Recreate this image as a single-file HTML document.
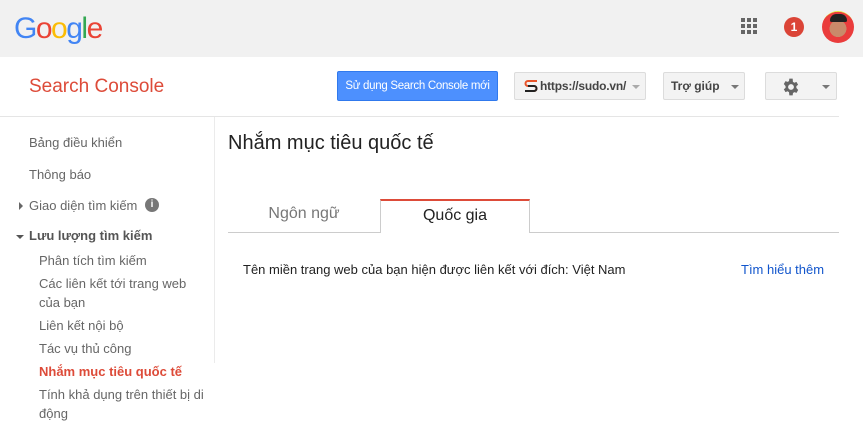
<!DOCTYPE html>
<html><head><meta charset="utf-8"><style>
*{margin:0;padding:0;box-sizing:border-box}
body{width:863px;height:421px;overflow:hidden;background:#fff;font-family:"Liberation Sans",Arial,sans-serif;position:relative;color:#222}
.a{position:absolute}
.hdr{left:0;top:0;width:863px;height:57px;background:#f1f1f1}
.btn{position:absolute;border:1px solid #dcdcdc;background:#f3f3f3;border-radius:2px;font-size:12px;font-weight:bold;color:#444;display:flex;align-items:center}
.caret{width:0;height:0;border-left:4px solid transparent;border-right:4px solid transparent;border-top:4px solid #777;position:absolute}
.nav{font-size:13px;color:#666;position:absolute;white-space:nowrap}
.sub{font-size:13px;color:#666;position:absolute;left:39px;line-height:19px}
</style></head><body>
<div class="a hdr"></div>
<div class="a" style="left:14px;top:12px;font-size:30px;letter-spacing:-1.5px;font-family:'Liberation Sans',sans-serif"><span style="color:#4285f4">G</span><span style="color:#ea4335">o</span><span style="color:#fbbc05">o</span><span style="color:#4285f4">g</span><span style="color:#34a853">l</span><span style="color:#ea4335">e</span></div>
<svg class="a" style="left:741px;top:18px" width="17" height="17"><g fill="#666"><rect x="0" y="0" width="4" height="4"/><rect x="6" y="0" width="4" height="4"/><rect x="12" y="0" width="4" height="4"/><rect x="0" y="6" width="4" height="4"/><rect x="6" y="6" width="4" height="4"/><rect x="12" y="6" width="4" height="4"/><rect x="0" y="12" width="4" height="4"/><rect x="6" y="12" width="4" height="4"/><rect x="12" y="12" width="4" height="4"/></g></svg>
<div class="a" style="left:784px;top:17px;width:20px;height:20px;border-radius:50%;background:#db4437;color:#fff;font-size:12px;font-weight:bold;text-align:center;line-height:20px">1</div>
<div class="a" style="left:822px;top:11px;width:32px;height:32px;border-radius:50%;background:radial-gradient(circle at 50% 55%,#c98a6a 0 35%,#ea3c3c 36% 70%,#e9e640 71%);overflow:hidden"><div style="position:absolute;left:8px;top:3px;width:17px;height:8px;background:#222;border-radius:8px 8px 2px 2px"></div></div>
<div class="a" style="left:29px;top:76px;font-size:19px;color:#dd4b39">Search Console</div>
<div class="a" style="left:337px;top:71px;width:161px;height:30px;background:#4d90fe;border:1px solid #3079ed;border-radius:2px;color:#fff;font-size:11.5px;letter-spacing:-0.3px;text-align:center;line-height:28px;white-space:nowrap">Sử dụng Search Console mới</div>
<div class="btn" style="left:514px;top:72px;width:132px;height:28px"><svg style="margin-left:9px" width="14" height="14"><path d="M13 2H4a2.5 2.5 0 0 0 0 5h6a2.5 2.5 0 0 1 0 5H1" stroke="#e8542a" stroke-width="2" fill="none"/><path d="M4 7h6a2.5 2.5 0 0 1 0 5H1" stroke="#222" stroke-width="2" fill="none"/></svg><span style="margin-left:2px;letter-spacing:-0.2px">https://sudo.vn/</span><span class="caret" style="left:117px;top:12px;border-top-color:#aaa"></span></div>
<div class="btn" style="left:663px;top:72px;width:82px;height:28px"><span style="margin-left:7px">Trợ giúp</span><span class="caret" style="left:67px;top:12px"></span></div>
<div class="btn" style="left:765px;top:72px;width:72px;height:28px"><svg style="position:absolute;left:15px;top:4px" width="20" height="20" viewBox="0 0 24 24"><path fill="#666" d="M19.4 13c.04-.33.06-.66.06-1s-.02-.67-.06-1l2.1-1.65-2-3.46-2.5 1a7.3 7.3 0 0 0-1.7-1L15 2h-4l-.4 2.9c-.6.25-1.200.6-1.7 1l-2.5-1-2 3.46L6.5 11c-.04.33-.06.66-.06 1s.02.67.06 1l-2.1 1.65 2 3.46 2.5-1c.5.4 1.1.75 1.7 1L11 22h4l.4-2.9c.6-.25 1.2-.6 1.7-1l2.5 1 2-3.46zM13 15.5a3.5 3.5 0 1 1 0-7 3.5 3.5 0 0 1 0 7z" transform="translate(-1 0)"/></svg><span class="caret" style="left:56px;top:12px"></span></div>
<div class="a" style="left:0;top:116px;width:839px;height:1px;background:#e5e5e5"></div>
<div class="a" style="left:214px;top:117px;width:1px;height:246px;background:#ebebeb"></div>
<div class="nav" style="left:29px;top:135px">Bảng điều khiển</div>
<div class="nav" style="left:29px;top:167px">Thông báo</div>
<div class="caret" style="left:19px;top:202px;border:4px solid transparent;border-left:4px solid #666;border-right:0"></div>
<div class="nav" style="left:29px;top:198px">Giao diện tìm kiếm</div>
<div class="a" style="left:145px;top:198px;width:14px;height:14px;border-radius:50%;background:#777;color:#fff;font-size:10px;font-weight:bold;text-align:center;line-height:14px">i</div>
<div class="caret" style="left:16px;top:235px;border-top-color:#555"></div>
<div class="nav" style="left:29px;top:228px;font-weight:bold;color:#555">Lưu lượng tìm kiếm</div>
<div class="sub" style="top:251px">Phân tích tìm kiếm</div>
<div class="sub" style="top:274px;width:170px">Các liên kết tới trang web<br>của bạn</div>
<div class="sub" style="top:316px">Liên kết nội bộ</div>
<div class="sub" style="top:339px">Tác vụ thủ công</div>
<div class="sub" style="top:362px;color:#dd4b39;font-weight:bold">Nhắm mục tiêu quốc tế</div>
<div class="sub" style="top:385px;width:175px">Tính khả dụng trên thiết bị di<br>động</div>
<div class="a" style="left:228px;top:132px;font-size:20px;color:#222">Nhắm mục tiêu quốc tế</div>
<div class="a" style="left:228px;top:232px;width:611px;height:1px;background:#ccc"></div>
<div class="a" style="left:380px;top:199px;width:150px;height:34px;background:#fff;border:1px solid #ccc;border-top:2px solid #dd4b39;border-bottom:none;text-align:center;font-size:16px;line-height:30px;color:#222">Quốc gia</div>
<div class="a" style="left:228px;top:205px;width:152px;text-align:center;font-size:16px;color:#777">Ngôn ngữ</div>
<div class="a" style="left:243px;top:262px;font-size:13px;color:#222">Tên miền trang web của bạn hiện được liên kết với đích: Việt Nam</div>
<div class="a" style="left:741px;top:262px;font-size:13px;color:#1155cc">Tìm hiểu thêm</div>
</body></html>
